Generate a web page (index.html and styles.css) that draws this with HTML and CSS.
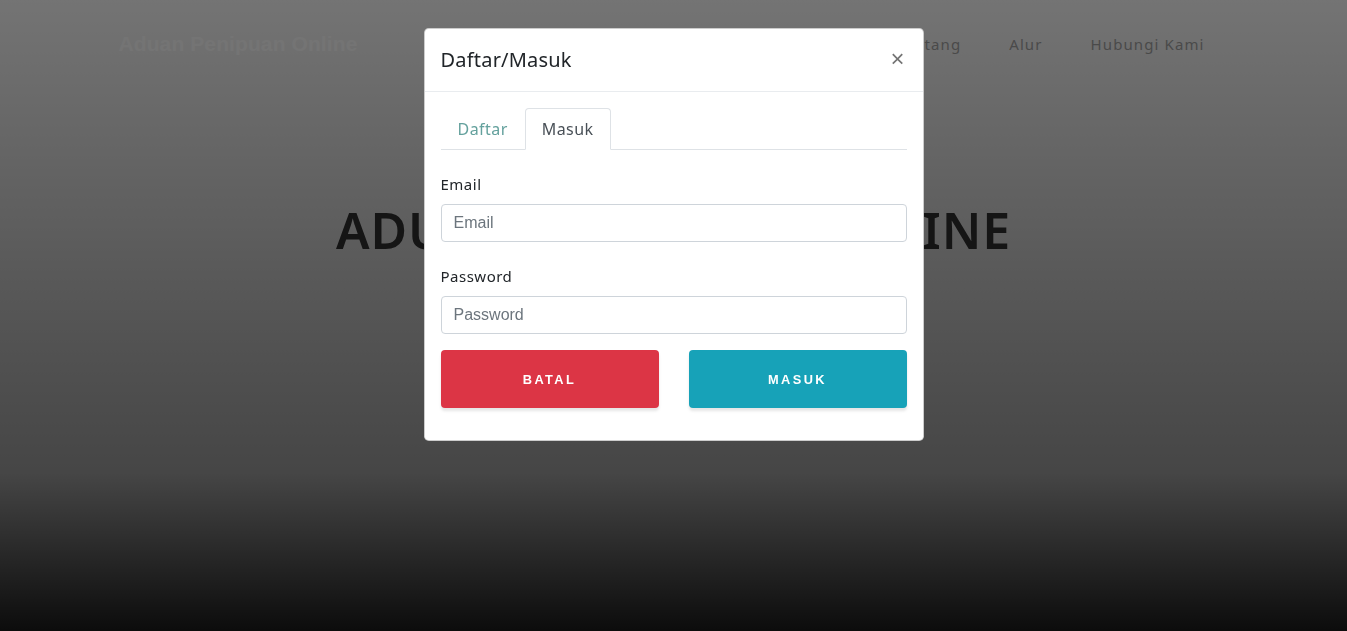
FILE: index.html
```html
<!DOCTYPE html>
<html lang="id">
<head>
<meta charset="utf-8">
<title>Aduan Penipuan Online</title>
<link rel="stylesheet" href="styles.css">
</head>
<body>
<div class="page">
  <nav class="navbar">
    <div class="container nav-inner">
      <a class="brand" href="#">Aduan Penipuan Online</a>
      <ul class="nav-links">
        <li><a href="#">Beranda</a></li>
        <li><a href="#">Tentang</a></li>
        <li><a href="#">Alur</a></li>
        <li><a href="#">Hubungi Kami</a></li>
      </ul>
    </div>
  </nav>
  <header class="masthead">
    <h1 class="masthead-title">ADUAN PENIPUAN ONLINE</h1>
  </header>
</div>

<div class="backdrop"></div>

<div class="modal">
  <div class="modal-content">
    <div class="modal-header">
      <h5 class="modal-title">Daftar/Masuk</h5>
      <button class="close" type="button" aria-label="Close">×</button>
    </div>
    <div class="modal-body">
      <ul class="tabs">
        <li><a class="tab" href="#">Daftar</a></li>
        <li><a class="tab active" href="#">Masuk</a></li>
      </ul>
      <form class="form">
        <label class="label" for="email">Email</label>
        <input class="input" id="email" type="email" placeholder="Email">
        <label class="label" for="password">Password</label>
        <input class="input" id="password" type="password" placeholder="Password">
        <div class="actions">
          <button class="btn btn-danger" type="button">Batal</button>
          <button class="btn btn-info" type="button">Masuk</button>
        </div>
      </form>
    </div>
  </div>
</div>
</body>
</html>
```

FILE: styles.css
```css
* { box-sizing: border-box; }

html, body {
  margin: 0;
  height: 631px;
  overflow: hidden;
}

body {
  font-family: "Noto Sans", "Open Sans", sans-serif;
  color: #212529;
}

.page {
  height: 631px;
  background: linear-gradient(to bottom, #e8e8e8 0%, #8c8c8c 75%, #181818 100%);
}

.container {
  width: 1140px;
  margin: 0 auto;
  padding: 0 15px;
}

.navbar {
  height: 88px;
}

.nav-inner {
  height: 100%;
  display: flex;
  align-items: center;
  justify-content: space-between;
}

.brand {
  font-family: "Liberation Sans", Arial, sans-serif;
  font-weight: 700;
  font-size: 21px;
  letter-spacing: 0.1px;
  color: #e9e9e9;
  text-decoration: none;
}

.nav-links {
  list-style: none;
  margin: 0;
  padding: 0;
  display: flex;
}

.nav-links a {
  display: block;
  padding: 0 24px;
  font-size: 15px;
  letter-spacing: 1.1px;
  color: #959595;
  text-decoration: none;
}

.masthead {
  text-align: center;
}

.masthead-title {
  margin: 117px 0 0;
  font-size: 50px;
  line-height: 1;
  font-weight: 600;
  letter-spacing: 0.9px;
  color: #2a2a2a;
}

.backdrop {
  position: fixed;
  inset: 0;
  background: rgba(0, 0, 0, 0.5);
}

.modal {
  position: fixed;
  inset: 0;
  display: flex;
  justify-content: center;
  align-items: flex-start;
  padding-top: 28px;
}

.modal-content {
  width: 500px;
  background: #fff;
  border: 1px solid rgba(0, 0, 0, 0.2);
  border-radius: 4.8px;
}

.modal-header {
  display: flex;
  align-items: flex-start;
  justify-content: space-between;
  padding: 16px;
  border-bottom: 1px solid #e9ecef;
}

.modal-title {
  margin: 0;
  font-size: 20px;
  line-height: 30px;
  font-weight: 400;
  letter-spacing: 0.2px;
  color: #212529;
}

.close {
  background: none;
  border: 0;
  padding: 0;
  margin: 0 2px 0 0;
  font-family: "Liberation Sans", Arial, sans-serif;
  font-size: 24px;
  font-weight: 400;
  line-height: 28px;
  color: #000;
  opacity: 0.55;
  cursor: pointer;
}

.modal-body {
  padding: 16px;
}

.tabs {
  list-style: none;
  margin: 0;
  padding: 0;
  display: flex;
  border-bottom: 1px solid #dee2e6;
}

.tab {
  display: block;
  margin-bottom: -1px;
  padding: 8px 16px;
  font-size: 16px;
  line-height: 24px;
  letter-spacing: 0.45px;
  color: #64a19d;
  text-decoration: none;
  border: 1px solid transparent;
  border-radius: 4px 4px 0 0;
}

.tab.active {
  color: #495057;
  background: #fff;
  border-color: #dee2e6 #dee2e6 #fff;
}

.form {
  display: flex;
  flex-direction: column;
}

.label {
  display: block;
  margin: 22px 0 8px;
  font-size: 15px;
  line-height: 24px;
  letter-spacing: 0.5px;
  color: #212529;
}

.input {
  width: 100%;
  height: 38px;
  padding: 6px 12px;
  font-family: "Liberation Sans", Arial, sans-serif;
  font-size: 16px;
  color: #495057;
  background: #fff;
  border: 1px solid #ced4da;
  border-radius: 4px;
}

.input::placeholder {
  color: #6c757d;
}

.actions {
  display: grid;
  grid-template-columns: 1fr 1fr;
  column-gap: 30px;
  margin: 16px 0 16px;
}

.btn {
  height: 58px;
  border: 0;
  border-radius: 4px;
  font-family: "Liberation Sans", Arial, sans-serif;
  font-size: 12.8px;
  font-weight: 700;
  letter-spacing: 2.4px;
  text-transform: uppercase;
  color: #fff;
  box-shadow: 0 3px 3px 0 rgba(0, 0, 0, 0.1);
  cursor: pointer;
}

.btn-danger { background: #dc3545; }
.btn-info { background: #17a2b8; }
```
